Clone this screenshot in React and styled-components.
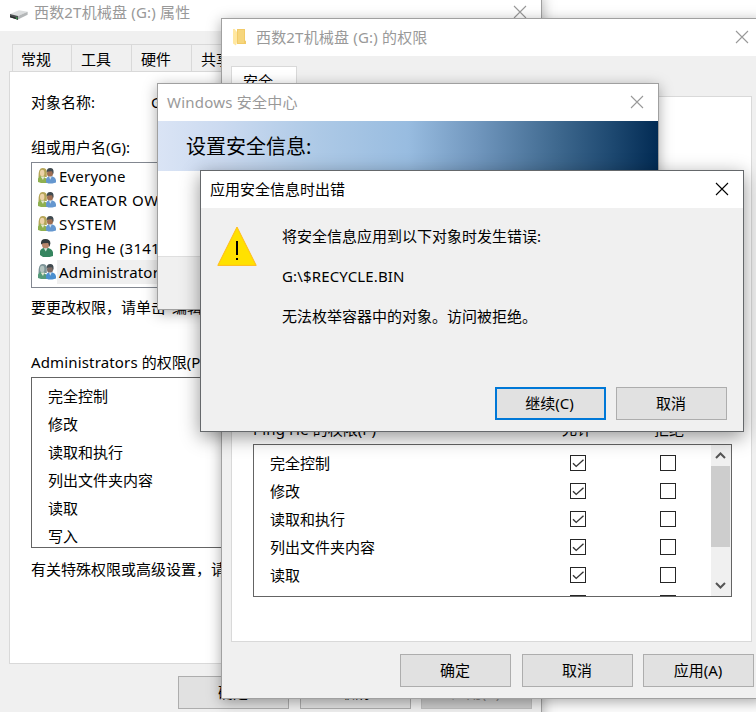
import React from 'react';
import styled, { createGlobalStyle, css } from 'styled-components';

const GlobalStyle = createGlobalStyle`
    * {
        box-sizing: border-box;
    }

    body {
        margin: 0;
        background: #fff;
        overflow: hidden;
    }
`;

const Desktop = styled.div`
    position: relative;
    width: 756px;
    height: 712px;
    overflow: hidden;
    background: #fff;
    color: #000;
    font: 15px/20px 'Noto Sans', 'Noto Sans CJK SC', sans-serif;
    white-space: nowrap;
`;

const Window = styled.section`
    position: absolute;
    left: ${props => props.$x}px;
    top: ${props => props.$y}px;
    width: ${props => props.$width}px;
    height: ${props => props.$height}px;
    display: flex;
    flex-direction: column;
    overflow: hidden;
    background: #f0f0f0;
    border: 1px solid ${props => (props.$active ? '#65686b' : '#a0a0a0')};
    box-shadow: ${props => (props.$active
        ? '0 5px 18px rgba(0, 0, 0, 0.42)'
        : '0 3px 13px rgba(0, 0, 0, 0.34)')};
`;

const TitleBar = styled.header`
    flex: 0 0 37px;
    display: flex;
    align-items: center;
    padding: 0 14px 2px ${props => props.$indent || 9}px;
    background: #fff;
    color: ${props => (props.$active ? '#000' : '#999')};

    svg {
        flex: none;
    }
`;

const Title = styled.h1`
    flex: 1;
    margin: 0;
    font-size: 15px;
    font-weight: 400;
    letter-spacing: ${props => props.$spacing || 0}px;
`;

const TitleIcon = styled.span`
    display: flex;
    width: ${props => props.$width}px;
    padding-top: ${props => props.$drop || 0}px;
`;

const Tabs = styled.nav`
    display: flex;
    padding-left: ${props => props.$indent}px;
    margin-top: ${props => props.$top}px;
`;

const Tab = styled.div`
    width: 60px;
    height: 27px;
    padding: 4px 0 0 9px;
    border: 1px solid #d9d9d9;
    border-width: 1px 1px 0 0;

    &:first-child {
        padding-left: 8px;
        border-left-width: 1px;
    }

    ${props => props.$selected && css`
        width: 66px;
        height: 30px;
        background: #fff;

        &:first-child {
            padding-left: 11px;
        }
    `}
`;

const Panel = styled.div`
    display: flex;
    flex-direction: column;
    height: ${props => props.$height}px;
    margin: 0 ${props => props.$right}px 0 9px;
    padding: ${props => props.$top}px 19px 0 21px;
    background: #fff;
    border: 1px solid #d9d9d9;
`;

const Line = styled.div`
    flex: none;
    height: 20px;
    margin-top: ${props => props.$top || 0}px;
    margin-bottom: ${props => props.$gap || 0}px;
`;

const NameLabel = styled.span`
    display: inline-block;
    width: 120px;
`;

const Latin = styled.span`
    letter-spacing: 0.15px;
`;

const UserList = styled.ul`
    flex: none;
    height: 126px;
    margin: 0 0 9px;
    padding: 1px 0 0 5px;
    list-style: none;
    border: 1px solid #828790;
`;

const UserRow = styled.li`
    display: flex;
    align-items: center;
    height: 24px;
`;

const UserName = styled.span`
    flex: 1;
    margin-left: 1px;
    padding-left: 2px;
    line-height: 24px;
    letter-spacing: ${props => props.$spacing}px;
    background: ${props => (props.$selected ? '#f0f0f0' : 'transparent')};
`;

const PermissionBox = styled.div`
    display: flex;
    flex: none;
    height: ${props => props.$height}px;
    overflow: hidden;
    border: 1px solid #646464;
`;

const PermissionRows = styled.div`
    flex: 1;
    padding: 4px 0 0 16px;
`;

const PermissionRow = styled.div`
    display: grid;
    grid-template-columns: 300px 90px 1fr;
    align-items: center;
    height: 28px;
`;

const PermissionHead = styled.div`
    display: grid;
    grid-template-columns: 309px 92px 1fr;
    flex: none;
    height: 20px;
    margin-bottom: 5px;
`;

const CheckBox = styled.span`
    display: flex;
    width: 16px;
    height: 16px;
    background: #fff;
    border: 1px solid #262626;
`;

const ScrollBar = styled.div`
    display: flex;
    flex-direction: column;
    justify-content: space-between;
    width: 20px;
    padding-right: 1px;
    background: #f0f0f0;
`;

const ScrollThumb = styled.div`
    height: 81px;
    background: #cdcdcd;
`;

const ScrollRest = styled.div`
    flex: 1;
`;

const Buttons = styled.footer`
    display: flex;
    gap: 10px;
    margin-top: ${props => props.$top}px;
    padding-left: ${props => props.$left}px;
`;

const Button = styled.button`
    flex: 0 0 111px;
    height: 33px;
    margin-right: ${props => props.$after || 0}px;
    padding: 0 1px 1px 0;
    font: inherit;
    color: #000;
    background: #e1e1e1;
    border: 1px solid #adadad;

    &:disabled {
        color: #838383;
        background: #ccc;
        border-color: #bfbfbf;
    }

    ${props => props.$primary && css`
        padding-right: 2px;
        border: 2px solid #0078d7;
    `}
`;

const Banner = styled.div`
    flex: none;
    height: 50px;
    padding: 1px 0 0 28px;
    font-size: 20px;
    line-height: 49px;
    background: linear-gradient(
        90deg,
        #dae4f5 0%,
        #cbdaf0 13%,
        #adc9e6 32%,
        #98bce0 50%,
        #7096bd 64%,
        #3e688e 80%,
        #1d4870 91%,
        #022b54 100%
    );
`;

const ProgressArea = styled.div`
    flex: 0 0 86px;
    background: #fff;
    border-bottom: 1px solid #dfdfdf;
`;

const Message = styled.div`
    display: flex;
    gap: 25px;
    height: 179px;
    padding: 18px 0 0 16px;
`;

const MessageText = styled.div`
    p {
        margin: 0 0 20px;
    }
`;

function CloseIcon({ color = '#999' }) {
    return (
        <svg width="14" height="14" viewBox="0 0 14 14" fill="none" stroke={color} strokeWidth="1.1">
            <path d="M1 1l12 12M13 1L1 13" />
        </svg>
    );
}

function DriveIcon() {
    return (
        <svg width="20" height="12" viewBox="0 0 20 12">
            <path d="M1 5L10 1.2l8.6 1.6L9 7z" fill="#dcdedf" />
            <path d="M9 7l9.6-4.2v3L9 10.6z" fill="#b4b7b8" />
            <path d="M1 5l8 2v3.8L1 8.2z" fill="#4b4f50" />
            <path d="M1 7l8 2.3v1.5L1 8.2z" fill="#26292a" />
            <path d="M6.8 8.4l1.6.4v1l-1.6-.4z" fill="#3de05a" />
        </svg>
    );
}

function FolderIcon() {
    return (
        <svg width="13" height="18" viewBox="0 0 13 18">
            <path d="M4 1h8v11.5l1 .5v3H4z" fill="#f2cb68" />
            <path d="M5 2h6v13H5z" fill="#f6d67d" />
            <path d="M0 1h1.6L4 4v10l-1 3.4L0 15.5z" fill="#ffe7a0" />
        </svg>
    );
}

function GroupIcon({ muted }) {
    return (
        <svg width="19" height="18" viewBox="0 0 19 18">
            <path d="M1.5 10Q1.3 1 5.6 1T9.8 5v5z" fill={muted ? '#7d9498' : '#b5a557'} />
            <ellipse cx="5.2" cy="6" rx="2.2" ry="3.2" fill={muted ? '#b3c4c0' : '#ecd2a8'} />
            <path d="M1 15v-3q0-2.4 3-3l2 .6 4 2.4v4H4z" fill={muted ? '#559a7a' : '#8fb050'} />
            <path d="M3.6 9.4L6 13l1.4-3.4z" fill="#e5e8d3" />
            <ellipse cx="13" cy="6.2" rx="3" ry="3.8" fill={muted ? '#7f6c66' : '#a06f53'} />
            <path d="M9.6 5.4Q9.6 1 13.2 1t3.4 4.4l-.6 2.2-1-3.4-4 .3z" fill="#414b50" />
            <path d="M9 15.6V13q0-3 3-3.6l1.2.6 1.8-.8q3.6 1 4 4.2v2l-3.6 1.2h-4z" fill={muted ? '#4a8fd0' : '#6597cf'} />
            <path d="M12 9.4l1.2 3.4 1.6-3.4z" fill="#d8e4ec" />
        </svg>
    );
}

function UserIcon() {
    return (
        <svg width="19" height="20" viewBox="0 0 19 20">
            <ellipse cx="8.6" cy="6.4" rx="3.7" ry="4.8" fill="#b7866b" />
            <path d="M4 6.4Q3.4 1 8.4 1t5 4.6l-1 3.4-1.2-4-5 .2z" fill="#333b3c" />
            <path d="M3 17v-3.4q0-2.6 4-3.6l2 .8 2.2-.8q4.4 1.2 4.8 4.6V18l-3.4 1H6z" fill="#35855f" />
            <path d="M6.8 10.2l2 3.4 1.6-3.4z" fill="#dce9e2" />
        </svg>
    );
}

function WarningIcon() {
    return (
        <svg width="40" height="40" viewBox="0 0 40 40">
            <path d="M20 1L39.2 39.4H.8z" fill="#ffe100" stroke="#ffba19" />
            <path d="M19 15h2v14h-2zM19 32h2v2h-2z" fill="#000" />
        </svg>
    );
}

function CheckIcon() {
    return (
        <svg width="14" height="14" viewBox="0 0 14 14" fill="none" stroke="#333" strokeWidth="1.4">
            <path d="M2 7.2l3.2 3.2L12.5 3.8" />
        </svg>
    );
}

function ScrollArrow({ down }) {
    return (
        <svg width="19" height="21" viewBox="0 0 19 21" fill="none" stroke="#555" strokeWidth="2">
            <path d={down ? 'M5 8l4.5 4.5L14 8' : 'M5 13l4.5-4.5L14 13'} />
        </svg>
    );
}

const users = [
    { name: 'Everyone', spacing: 0.2 },
    { name: 'CREATOR OWNER', spacing: 0.55 },
    { name: 'SYSTEM', spacing: 0.45 },
    { name: 'Ping He (3141)', spacing: 0.25, single: true },
    { name: 'Administrators', spacing: 0.2, selected: true },
];
const permissions = ['完全控制', '修改', '读取和执行', '列出文件夹内容', '读取', '写入'];

function DriveProperties() {
    return (
        <Window $x={-1} $y={-7} $width={543} $height={740}>
            <TitleBar>
                <TitleIcon $width={25} $drop={6}><DriveIcon /></TitleIcon>
                <Title $spacing={0.18}>西数2T机械盘 (G:) 属性</Title>
                <CloseIcon />
            </TitleBar>
            <Tabs $indent={12} $top={13}>
                <Tab>常规</Tab>
                <Tab>工具</Tab>
                <Tab>硬件</Tab>
                <Tab>共享</Tab>
            </Tabs>
            <Panel $height={593} $right={9} $top={20}>
                <Line $gap={25}>
                    <NameLabel>对象名称:</NameLabel>
                    <span>G:\</span>
                </Line>
                <Line $gap={5}>组或用户名(G):</Line>
                <UserList>
                    {users.map(user => (
                        <UserRow key={user.name}>
                            {user.single ? <UserIcon /> : <GroupIcon muted={user.selected} />}
                            <UserName $spacing={user.spacing} $selected={user.selected}>
                                {user.name}
                            </UserName>
                        </UserRow>
                    ))}
                </UserList>
                <Line $gap={35}>要更改权限，请单击"编辑"。</Line>
                <Line $gap={5}><Latin>Administrators</Latin> 的权限(P)</Line>
                <PermissionBox $height={171}>
                    <PermissionRows>
                        {permissions.map(name => (
                            <PermissionRow key={name}>{name}</PermissionRow>
                        ))}
                    </PermissionRows>
                </PermissionBox>
                <Line $top={11}>有关特殊权限或高级设置，请单击"高级"。</Line>
            </Panel>
            <Buttons $top={12} $left={178}>
                <Button $after={1}>确定</Button>
                <Button>取消</Button>
                <Button disabled>应用(A)</Button>
            </Buttons>
        </Window>
    );
}

function DrivePermissions() {
    return (
        <Window $x={221} $y={18} $width={543} $height={681}>
            <TitleBar $indent={11}>
                <TitleIcon $width={23}><FolderIcon /></TitleIcon>
                <Title $spacing={0.18}>西数2T机械盘 (G:) 的权限</Title>
                <CloseIcon />
            </TitleBar>
            <Tabs $indent={9} $top={10}>
                <Tab $selected>安全</Tab>
            </Tabs>
            <Panel $height={546} $right={11} $top={322}>
                <PermissionHead>
                    <span><Latin>Ping He</Latin> 的权限(P)</span>
                    <span>允许</span>
                    <span>拒绝</span>
                </PermissionHead>
                <PermissionBox $height={153}>
                    <PermissionRows>
                        {permissions.map(name => (
                            <PermissionRow key={name}>
                                <span>{name}</span>
                                <CheckBox><CheckIcon /></CheckBox>
                                <CheckBox />
                            </PermissionRow>
                        ))}
                    </PermissionRows>
                    <ScrollBar>
                        <ScrollArrow />
                        <ScrollThumb />
                        <ScrollRest />
                        <ScrollArrow down />
                    </ScrollBar>
                </PermissionBox>
            </Panel>
            <Buttons $top={12} $left={178}>
                <Button $after={1}>确定</Button>
                <Button>取消</Button>
                <Button>应用(A)</Button>
            </Buttons>
        </Window>
    );
}

function SecurityProgress() {
    return (
        <Window $x={157} $y={83} $width={502} $height={227}>
            <TitleBar>
                <Title $spacing={0.22}>Windows 安全中心</Title>
                <CloseIcon />
            </TitleBar>
            <Banner>设置安全信息:</Banner>
            <ProgressArea />
        </Window>
    );
}

function ErrorDialog() {
    return (
        <Window $x={200} $y={170} $width={544} $height={262} $active>
            <TitleBar $active>
                <Title>应用安全信息时出错</Title>
                <CloseIcon color="#000" />
            </TitleBar>
            <Message>
                <WarningIcon />
                <MessageText>
                    <p>将安全信息应用到以下对象时发生错误:</p>
                    <p><Latin>G:\$RECYCLE.BIN</Latin></p>
                    <p>无法枚举容器中的对象。访问被拒绝。</p>
                </MessageText>
            </Message>
            <Buttons $left={294} $top={0}>
                <Button $primary>继续(C)</Button>
                <Button>取消</Button>
            </Buttons>
        </Window>
    );
}

export default function App() {
    return (
        <>
            <GlobalStyle />
            <Desktop>
                <DriveProperties />
                <DrivePermissions />
                <SecurityProgress />
                <ErrorDialog />
            </Desktop>
        </>
    );
}
